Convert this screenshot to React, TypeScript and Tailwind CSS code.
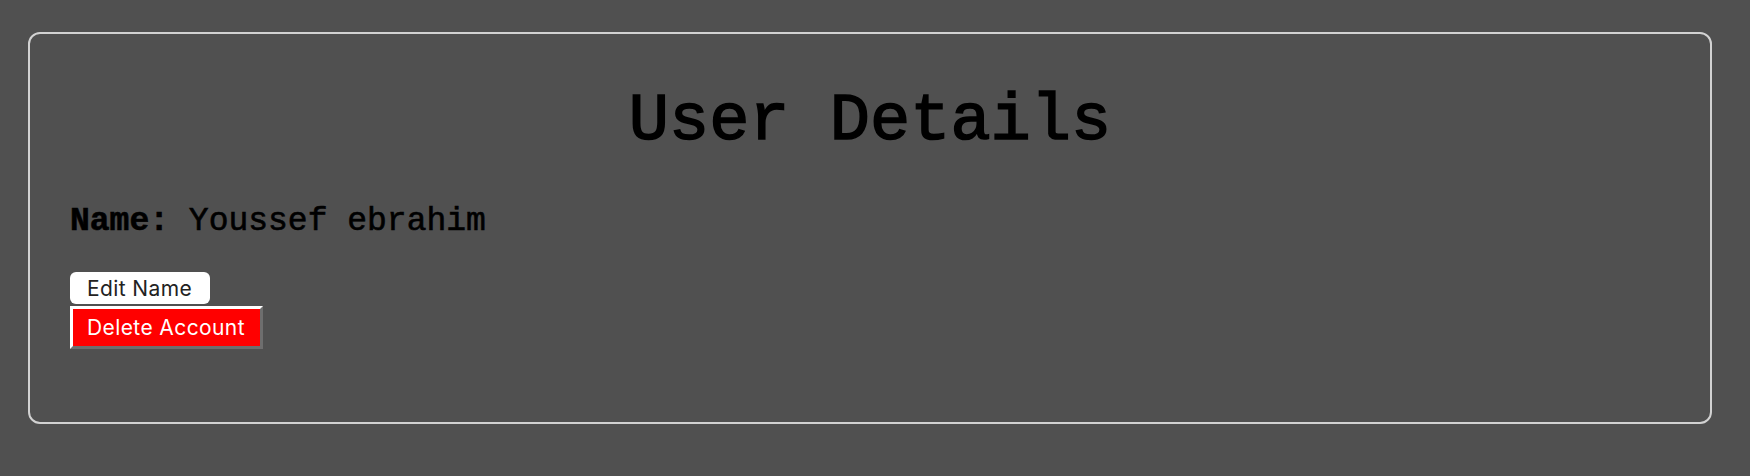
export default function App() {
  return (
    <div className="min-h-screen w-full bg-[#505050] pt-[32px] pl-[28px]">
      <div className="w-[1684px] h-[392px] rounded-[12px] border-2 border-[#d2d2d2] px-[40px]">
        {/* heading */}
        <h1 className="mt-[54px] text-center font-['Liberation_Mono',monospace] text-[67px] leading-none text-black [-webkit-text-stroke:1.6px_black]">
          User Details
        </h1>

        {/* name row */}
        <p className="mt-[50px] font-['Liberation_Mono',monospace] text-[33px] leading-none text-black [-webkit-text-stroke:0.6px_black]">
          <span className="font-bold">Name:</span> Youssef ebrahim
        </p>

        {/* actions */}
        <div className="mt-[34px] flex flex-col items-start gap-[2px] font-['Inter',sans-serif] text-[21px] tracking-[0.4px] leading-none">
          <button className="h-[32px] w-[140px] rounded-[6px] bg-white pl-[17px] text-left text-[#222]">
            Edit Name
          </button>
          <button className="h-[43px] w-[193px] border-[3px] border-t-white border-l-white border-b-[#6e6e6e] border-r-[#6e6e6e] bg-[#ff0000] pl-[14px] text-left text-white">
            Delete Account
          </button>
        </div>
      </div>
    </div>
  );
}
